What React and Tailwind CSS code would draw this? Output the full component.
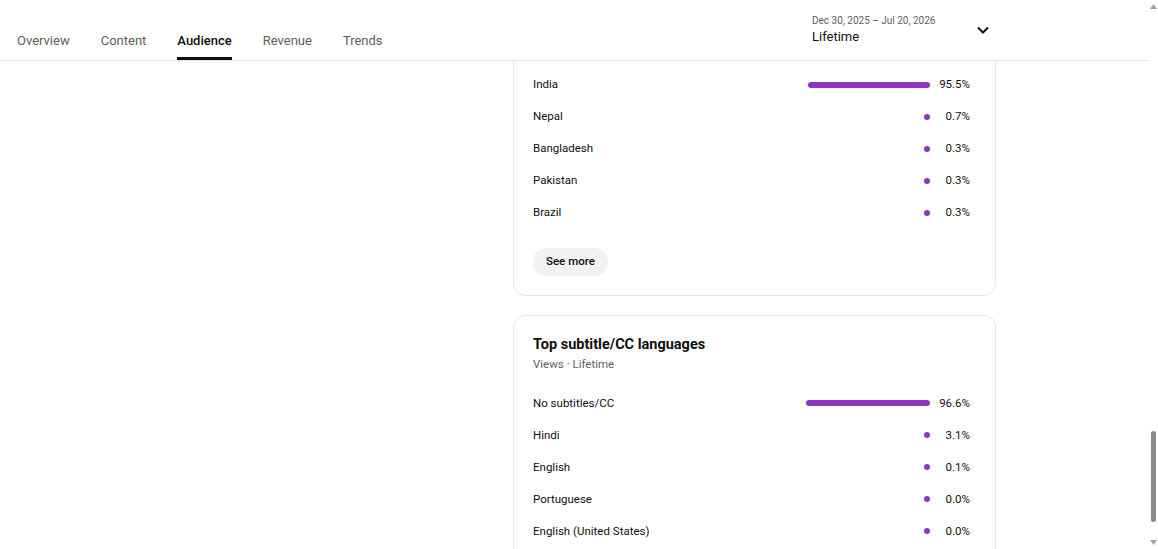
import React from 'react';

const countries = [
  { name: 'India', value: 95.5 },
  { name: 'Nepal', value: 0.7 },
  { name: 'Bangladesh', value: 0.3 },
  { name: 'Pakistan', value: 0.3 },
  { name: 'Brazil', value: 0.3 },
];

const languages = [
  { name: 'No subtitles/CC', value: 96.6 },
  { name: 'Hindi', value: 3.1 },
  { name: 'English', value: 0.1 },
  { name: 'Portuguese', value: 0.0 },
  { name: 'English (United States)', value: 0.0 },
];

const tabs = ['Overview', 'Content', 'Audience', 'Revenue', 'Trends'];

const StatRow = ({ name, value }) => {
  // bar track is ~128px wide, tiny values collapse to a dot
  const width = Math.max(6, Math.round((value / 100) * 128));
  return (
    <div className="flex items-center h-8 text-[11.5px] text-[#0f0f0f]">
      <span className="flex-1">{name}</span>
      <div className="w-[128px] flex justify-end">
        <div className="h-[6px] rounded-full bg-[#8e33c4]" style={{ width }} />
      </div>
      <span className="w-[40px] text-right">{value.toFixed(1)}%</span>
    </div>
  );
};

const App = () => {
  return (
    <div className="flex h-[549px] w-[1158px] overflow-hidden bg-white" style={{ fontFamily: 'Roboto, "Liberation Sans", sans-serif' }}>
      <div className="flex-1 flex flex-col min-w-0">
        {/* Header */}
        <div className="h-[61px] shrink-0 flex items-end border-b border-[#e5e5e5]">
          <div className="flex pl-[17px] gap-[31px] text-[13px] text-[#606060]">
            {tabs.map((t) => (
              <div
                key={t}
                className={`pb-[7px] border-b-[3px] ${t === 'Audience' ? 'border-[#0f0f0f] text-[#0f0f0f] font-medium' : 'border-transparent'}`}
              >
                {t}
              </div>
            ))}
          </div>
          <div className="ml-auto mr-[156px] self-start pt-[14px] flex items-center w-[180px]">
            <div className="flex-1">
              <div className="text-[10px] leading-[13px] text-[#606060]">Dec 30, 2025 – Jul 20, 2026</div>
              <div className="text-[13px] leading-[17px] text-[#0f0f0f] mt-[1px]">Lifetime</div>
            </div>
            <svg width="12" height="8" viewBox="0 0 12 8" fill="none" stroke="#0f0f0f" strokeWidth="2" className="mr-[3px]">
              <path d="M1 1.5L6 6.5L11 1.5" />
            </svg>
          </div>
        </div>

        {/* Body */}
        <div className="flex-1 pl-[513px] overflow-hidden">
          <div className="w-[483px] flex flex-col gap-[19px] -mt-[20px]">
            <div className="border border-[#e5e5e5] rounded-[12px] pl-[19px] pr-[25px] pt-[27px] pb-[19px]">
              {countries.map((c) => (
                <StatRow key={c.name} {...c} />
              ))}
              <button className="mt-[19px] h-[28px] px-[13px] rounded-full bg-[#f2f2f2] text-[11.5px] font-medium text-[#0f0f0f]">
                See more
              </button>
            </div>
            <div className="border border-[#e5e5e5] rounded-[12px] pl-[19px] pr-[25px] pt-[19px] pb-[19px]">
              <div className="text-[14.5px] font-bold text-[#0f0f0f] leading-[20px]">Top subtitle/CC languages</div>
              <div className="text-[11.5px] text-[#606060] mt-[1px] mb-[14px]">Views · Lifetime</div>
              {languages.map((l) => (
                <StatRow key={l.name} {...l} />
              ))}
            </div>
          </div>
        </div>
      </div>

      {/* Scrollbar */}
      <div className="w-[10px] shrink-0 flex flex-col items-center justify-between py-[4px]">
        <svg width="7" height="5" viewBox="0 0 7 5"><path d="M0 5 L3.5 0 L7 5Z" fill="#a3a3a3" /></svg>
        <div className="flex-1 flex flex-col justify-end pb-[18px]">
          <div className="w-[5px] h-[91px] rounded-full bg-[#8b8b8b]" />
        </div>
        <svg width="7" height="5" viewBox="0 0 7 5"><path d="M0 0 L7 0 L3.5 5Z" fill="#a3a3a3" /></svg>
      </div>
    </div>
  );
};

export default App;
